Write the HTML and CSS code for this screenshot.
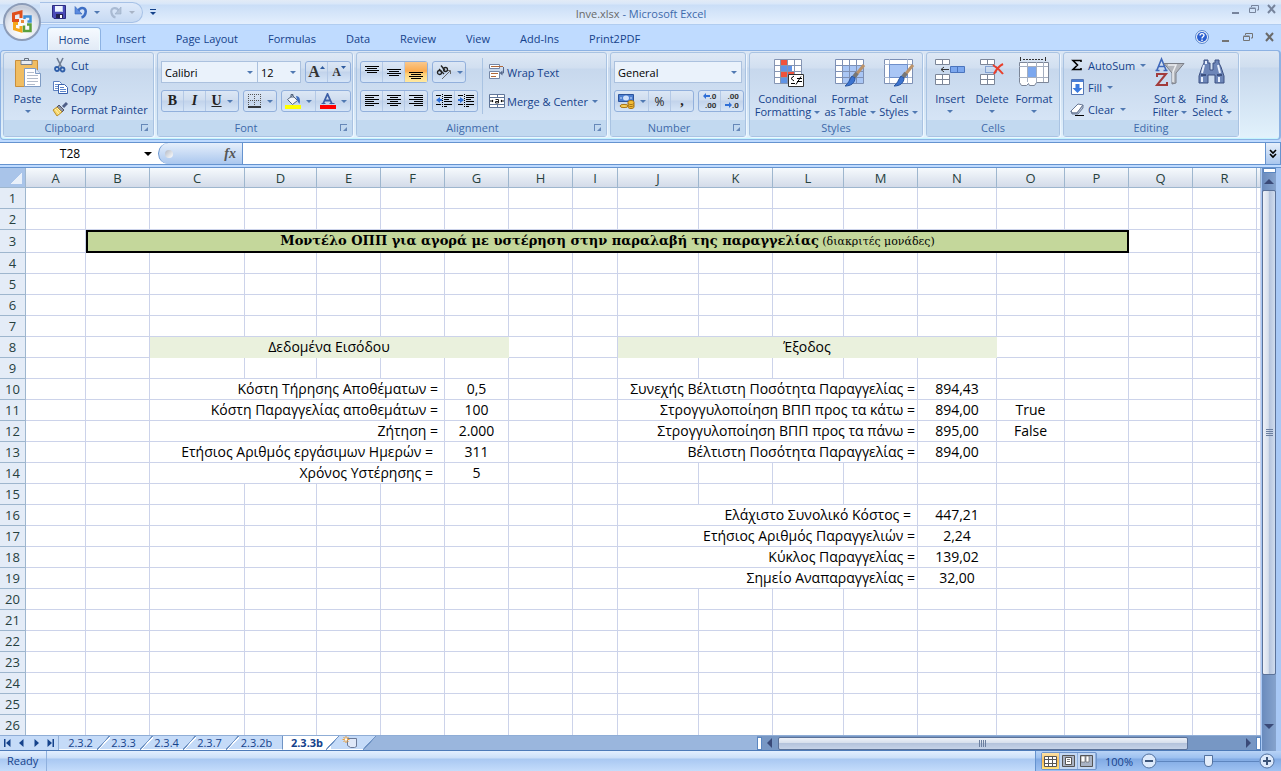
FILE: index.html
```html
<!DOCTYPE html>
<html lang="en">
<head>
    <meta charset="UTF-8">
    <meta name="viewport" content="width=device-width, initial-scale=1.0">
    <title>Inve.xlsx - Microsoft Excel</title>
    <link rel="stylesheet" href="styles.css">
</head>
<body>

    <!-- Title bar -->
    <header class="titlebar">
        <div class="quick-access">
            <button class="qa-btn" aria-label="Save">
                <svg width="14" height="14" viewBox="0 0 14 14"><path d="M.5.5h13v13H2L.5 12z" fill="#4a4ab8" stroke="#2c2c80"/><path d="M3 1h8v6H3z" fill="#eef3ff"/><path d="M10 1h1v6H3V6h7z" fill="#b9c8ee"/><path d="M4 9h7v4H4z" fill="#23234f"/><path d="M8 10h2v3H8z" fill="#fff"/></svg>
            </button>
            <button class="qa-btn" aria-label="Undo">
                <svg width="14" height="14" viewBox="0 0 14 14"><path d="M4 6c3-5 9-3 7.500 2C11 10.500 9.500 12 7.500 12.500" fill="none" stroke="#3f6fc4" stroke-width="2.600"/><path d="M1 1.500V9h7z" fill="#5b8be0" stroke="#3765b8" stroke-width=".6"/></svg>
            </button>
            <span class="arrow"></span>
            <button class="qa-btn qa-redo" aria-label="Redo">
                <svg width="14" height="14" viewBox="0 0 14 14"><path d="M10 6C7 1 1 3 2.500 8 3 10.500 4.500 12 6.500 12.500" fill="none" stroke="#a9bad2" stroke-width="2.200"/><path d="M12 2v7H6z" fill="#b4c3d8" stroke="#98abc6" stroke-width=".6"/></svg>
            </button>
            <span class="arrow arrow-off"></span>
        </div>
        <button class="qa-more" aria-label="Customize Quick Access Toolbar"><span class="arrow arrow-dark"></span></button>
        <h1 class="title"><span class="title-file">Inve.xlsx</span> - Microsoft Excel</h1>
        <div class="win-buttons">
            <button aria-label="Minimize"><svg width="10" height="10" viewBox="0 0 10 10"><path d="M1 8h7v2H1z" fill="#77849c"/></svg></button>
            <button aria-label="Restore"><svg width="10" height="10" viewBox="0 0 10 10"><path d="M2.500 3V1.500h7V6H8M.5 4.500h6v4h-6zM.5 4h6" fill="none" stroke="#77849c"/></svg></button>
            <button aria-label="Close"><svg width="10" height="10" viewBox="0 0 10 10"><path d="M1 1l7 8M8 1L1 9" stroke="#77849c" stroke-width="2"/></svg></button>
        </div>
    </header>

    <!-- Office button, over the title bar and the tabs -->
    <button class="office-btn" aria-label="Office Button">
        <svg width="26" height="26" viewBox="0 0 24 26">
            <g fill="none" stroke-width="3">
                <path d="M9 11.500H3.500V5L11 3v6" stroke="#e0501c"/>
                <path d="M14.500 10V7.500h6v5h-3" stroke="#3f8ed6" stroke-width="2.500"/>
                <path d="M8 14.500H4.500V20l6.500 2v-5" stroke="#f5a81c"/>
                <path d="M14 16.500v5.500h6.500v-6.500h-3.500" stroke="#5ba03c" stroke-width="2.500"/>
            </g>
            <path d="M11 11h3v3h-3z" fill="#e88a3a"/>
        </svg>
    </button>

    <!-- Ribbon tabs -->
    <nav class="tabs">
        <button class="tab tab-active">Home</button>
        <button class="tab">Insert</button>
        <button class="tab">Page Layout</button>
        <button class="tab">Formulas</button>
        <button class="tab">Data</button>
        <button class="tab">Review</button>
        <button class="tab">View</button>
        <button class="tab">Add-Ins</button>
        <button class="tab">Print2PDF</button>
        <div class="doc-buttons">
            <button aria-label="Help"><svg width="14" height="14" viewBox="0 0 14 14"><circle cx="7" cy="7" r="6.400" fill="#fff" stroke="#4a7cc8"/><circle cx="7" cy="7" r="5" fill="#2a5fd0"/><path d="M5 5.500C5 3 9 3 9 5.300 9 6.800 7 6.800 7 8.500M7 9.500V11" fill="none" stroke="#fff" stroke-width="1.400"/></svg></button>
            <button aria-label="Minimize workbook"><svg width="10" height="10" viewBox="0 0 10 10"><path d="M1 8h7v2H1z" fill="#747474"/></svg></button>
            <button aria-label="Restore workbook"><svg width="10" height="10" viewBox="0 0 10 10"><path d="M2.500 3V1.500h7V6H8M.5 4.500h6v4h-6zM.5 4h6" fill="none" stroke="#747474"/></svg></button>
            <button aria-label="Close workbook"><svg width="10" height="10" viewBox="0 0 10 10"><path d="M1 1l7 8M8 1L1 9" stroke="#6a6a6a" stroke-width="2"/></svg></button>
        </div>
    </nav>

    <!-- Ribbon -->
    <div class="ribbon">

        <section class="group group-clipboard">
            <div class="group-body">
                <button class="big-btn">
                    <svg width="32" height="32" viewBox="0 0 32 32"><path d="M3.500 3.500h22v26h-22z" fill="#f0bd62" stroke="#c98f3c"/><path d="M9 3.500h11v4H9z" fill="#e8ecf2" stroke="#76808e"/><path d="M12.500 3.500v-2h4v2" fill="none" stroke="#66707e"/><path d="M12.500 11.500h11l5 5v13h-16z" fill="#fff" stroke="#7f9cc4"/><path d="M23.500 11.500v5h5" fill="#dfe8f5" stroke="#7f9cc4"/><path d="M15 15.500h7M15 18.500h11M15 21.500h11M15 24.500h11M15 27.500h8" stroke="#b3bccb"/></svg>
                    <span>Paste</span>
                    <span class="arrow"></span>
                </button>
                <div class="stack">
                    <button class="row-btn"><svg width="16" height="16" viewBox="0 0 16 16"><path d="M5 1l5 10M11 1L6 11" stroke="#6f7c92" stroke-width="1.600"/><circle cx="5" cy="12" r="2" fill="none" stroke="#2f5ea8" stroke-width="1.800"/><circle cx="10.500" cy="12.500" r="2" fill="none" stroke="#2f5ea8" stroke-width="1.800"/></svg>Cut</button>
                    <button class="row-btn"><svg width="16" height="16" viewBox="0 0 16 16"><path d="M1.500 2.500h6l2 2v7h-8z" fill="#fff" stroke="#5b7fc0"/><path d="M3 5.500h4M3 7.500h3M3 9.500h3" stroke="#6f92cf"/><path d="M6.500 5.500h6l3 3v6h-9z" fill="#fff" stroke="#3a62ae"/><path d="M8 8.500h4M8 10.500h6M8 12.500h6" stroke="#5b84cc"/></svg>Copy</button>
                    <button class="row-btn"><svg width="16" height="16" viewBox="0 0 16 16"><path d="M11 6l4-4" stroke="#4e5f88" stroke-width="3"/><path d="M7 4l5 5-2 2-5-5z" fill="#8a94a8" stroke="#556"/><path d="M5 6l5 5-5 4-4-6z" fill="#f6d568" stroke="#b98f2c"/><path d="M3 8l4 5M5 7l4 4" stroke="#fff3b8"/></svg>Format Painter</button>
                </div>
            </div>
            <footer class="group-label">Clipboard<i class="launcher"></i></footer>
        </section>

        <section class="group group-font">
            <div class="group-body rows">
                <div class="tool-row">
                    <div class="combos">
                        <label class="combo combo-font"><select aria-label="Font"><option>Calibri</option></select></label>
                        <label class="combo combo-size"><select aria-label="Font size"><option>12</option></select></label>
                    </div>
                    <div class="btn-set">
                        <button class="glyph glyph-a" aria-label="Increase font size">A<svg width="5" height="12" viewBox="0 0 5 12"><path d="M0 3l2.500-3L5 3z" fill="#2d5a9e"/></svg></button>
                        <button class="glyph glyph-a glyph-small" aria-label="Decrease font size">A<svg width="5" height="12" viewBox="0 0 5 12"><path d="M0 0h5L2.500 3z" fill="#2d5a9e"/></svg></button>
                    </div>
                </div>
                <div class="tool-row">
                    <div class="btn-set">
                        <button class="glyph"><b>B</b></button>
                        <button class="glyph"><b><i>I</i></b></button>
                        <button class="glyph wide"><b><u>U</u></b><span class="arrow"></span></button>
                    </div>
                    <div class="btn-set">
                        <button class="wide" aria-label="Borders"><svg width="14" height="14" viewBox="0 0 14 14"><path d="M.5 0v12M6.500 0v12M12.500 0v12M0 .5h13M0 6.500h13" stroke="#555" stroke-dasharray="1 1"/><path d="M0 13h13" stroke="#000" stroke-width="1.500"/></svg><span class="arrow"></span></button>
                    </div>
                    <div class="btn-set">
                        <button class="wider" aria-label="Fill color"><svg width="16" height="16" viewBox="0 0 16 16"><path d="M2.500 6.500l5-4 5 5-5 4z" fill="#f4f7fc" stroke="#53657f"/><path d="M6 5V1.500h2V5" fill="none" stroke="#53657f"/><path d="M11 3c4 0 4.500 4 3.500 8-1-1-2-3-2.500-4.500z" fill="#3f6ec0"/><path d="M0 12h16v4H0z" fill="#ff0"/></svg><span class="arrow"></span></button>
                        <button class="wider" aria-label="Font color"><svg width="16" height="16" viewBox="0 0 16 16"><path d="M3 11L7.500 1 12 11M4.500 7.500h6" fill="none" stroke="#3d5fa6" stroke-width="1.800"/><path d="M1.500 10.500h4M9.500 10.500h5" stroke="#3d5fa6"/><path d="M0 12h16v4H0z" fill="#f00"/></svg><span class="arrow"></span></button>
                    </div>
                </div>
            </div>
            <footer class="group-label">Font<i class="launcher"></i></footer>
        </section>

        <section class="group group-align">
            <div class="group-body">
                <div class="rows">
                    <div class="tool-row">
                        <div class="btn-set">
                            <button aria-label="Top align"><svg width="14" height="14" viewBox="0 0 14 14"><path d="M0 1.500h14M2 3.500h10M0 5.500h14M2 7.500h10" stroke="#000"/></svg></button>
                            <button aria-label="Middle align"><svg width="14" height="14" viewBox="0 0 14 14"><path d="M0 4.500h14M2 6.500h10M0 8.500h14M2 10.500h10" stroke="#000"/></svg></button>
                            <button class="pressed" aria-label="Bottom align"><svg width="14" height="14" viewBox="0 0 14 14"><path d="M0 7.500h14M2 9.500h10M0 11.500h14M2 13.500h10" stroke="#000"/></svg></button>
                        </div>
                        <div class="btn-set">
                            <button class="wide" aria-label="Orientation"><svg width="16" height="16" viewBox="0 0 16 16"><path d="M6 15l8-8M14.500 10V6.500H11" fill="none" stroke="#666"/><circle cx="3.500" cy="8.500" r="2" fill="none" stroke="#222" stroke-width="1.300"/><path d="M3 5l5 5" stroke="#222" stroke-width="1.300"/><circle cx="9.500" cy="5.500" r="2" fill="none" stroke="#222" stroke-width="1.300"/><path d="M5 1.500l4 5" stroke="#222" stroke-width="1.300"/></svg><span class="arrow"></span></button>
                        </div>
                    </div>
                    <div class="tool-row">
                        <div class="btn-set">
                            <button aria-label="Align left"><svg width="14" height="14" viewBox="0 0 14 14"><path d="M0 1.500h14M0 3.500h9M0 5.500h14M0 7.500h9M0 9.500h14M0 11.500h9" stroke="#000"/></svg></button>
                            <button aria-label="Center"><svg width="14" height="14" viewBox="0 0 14 14"><path d="M0 1.500h14M3 3.500h8M0 5.500h14M3 7.500h8M0 9.500h14M3 11.500h8" stroke="#000"/></svg></button>
                            <button aria-label="Align right"><svg width="14" height="14" viewBox="0 0 14 14"><path d="M0 1.500h14M5 3.500h9M0 5.500h14M5 7.500h9M0 9.500h14M5 11.500h9" stroke="#000"/></svg></button>
                        </div>
                        <div class="btn-set">
                            <button aria-label="Decrease indent"><svg width="16" height="14" viewBox="0 0 16 14"><path d="M0 1.500h5M8 1.500h8M8 3.500h8M8 5.500h5M8 7.500h8M0 10.500h5M8 10.500h8M8 12.500h3" stroke="#000"/><path d="M6.500 0v14" stroke="#000" stroke-dasharray="1 1"/><path d="M0 6l4-3v2h2v2H4v2z" fill="#2f6fd6"/></svg></button>
                            <button aria-label="Increase indent"><svg width="16" height="14" viewBox="0 0 16 14"><path d="M0 1.500h5M8 1.500h8M8 3.500h8M8 5.500h5M8 7.500h8M0 10.500h5M8 10.500h8M8 12.500h3" stroke="#000"/><path d="M6.500 0v14" stroke="#000" stroke-dasharray="1 1"/><path d="M6 6L2 3v2H0v2h2v2z" fill="#2f6fd6"/></svg></button>
                        </div>
                    </div>
                </div>
                <div class="wrap-merge">
                    <button class="row-btn"><svg width="16" height="16" viewBox="0 0 16 16"><path d="M.5.5h10v4H.5zM.5 7.500h10v7H.5z" fill="#fff" stroke="#7486a5"/><path d="M2 2.500h12M2 9.500h7M2 12.500h5" stroke="#b0693a"/><path d="M14.500 3v6h-2" fill="none" stroke="#56698c"/><path d="M10.500 9l3-2.500v5z" fill="#56698c"/></svg>Wrap Text</button>
                    <button class="row-btn"><svg width="16" height="16" viewBox="0 0 16 16"><path d="M.5 1.500h15v13H.5z" fill="#fff" stroke="#5f7599"/><path d="M0 4.500h16M0 11.500h16M8.500 1v3M8.500 12v3" stroke="#5f7599"/><path d="M1 8h3M12 8h3" stroke="#000"/><path d="M4.500 8L3 6.500v3zM11.500 8L13 6.500v3z" fill="#000"/><path d="M6.500 6.500h3v3.500h-3V8.500h3" fill="none" stroke="#222"/></svg>Merge &amp; Center<span class="arrow"></span></button>
                </div>
            </div>
            <footer class="group-label">Alignment<i class="launcher"></i></footer>
        </section>

        <section class="group group-number">
            <div class="group-body rows">
                <div class="tool-row">
                    <label class="combo combo-number"><select aria-label="Number format"><option>General</option></select></label>
                </div>
                <div class="tool-row">
                    <div class="btn-set">
                        <button class="wider" aria-label="Accounting format"><svg width="17" height="16" viewBox="0 0 17 16"><path d="M.5 1.500h15v7H.5z" fill="#4d7fd0" stroke="#2b539c"/><ellipse cx="8" cy="5" rx="3" ry="2.500" fill="#cfe0fa"/><path d="M2 5h2M12 5h2" stroke="#cfe0fa"/><path d="M10 9c0-2 6-2 6 0v5c0 2-6 2-6 0z" fill="#f3bd36" stroke="#a87416"/><path d="M10 10.500c2 1.500 4 1.500 6 0M10 12.500c2 1.500 4 1.500 6 0" fill="none" stroke="#a87416"/><ellipse cx="6" cy="13" rx="4" ry="1.600" fill="#f7cf58" stroke="#a87416"/></svg><span class="arrow"></span></button>
                        <button class="sign">%</button>
                        <button class="glyph"><b>,</b></button>
                    </div>
                    <div class="btn-set">
                        <button aria-label="Increase decimal">
                            <span class="decimals">
                                <span><svg width="7" height="6" viewBox="0 0 7 6"><path d="M0 3l3-3v2h4v2H3v2z" fill="#2f6fd6"/></svg>.0</span>
                                <span>.00</span>
                            </span>
                        </button>
                        <button aria-label="Decrease decimal">
                            <span class="decimals">
                                <span>.00</span>
                                <span><svg width="7" height="6" viewBox="0 0 7 6"><path d="M7 3L4 0v2H0v2h4v2z" fill="#2f6fd6"/></svg>.0</span>
                            </span>
                        </button>
                    </div>
                </div>
            </div>
            <footer class="group-label">Number<i class="launcher"></i></footer>
        </section>

        <section class="group group-styles">
            <div class="group-body">
                <button class="big-btn">
                    <svg width="32" height="32" viewBox="0 0 32 32"><path d="M2.500 2.500h27v24h-27z" fill="#fff"/><path d="M9 3h7v5H9zM9 14h13v6H9z" fill="#f0523c"/><path d="M9 8h11v6H9zM9 20h6v6H9z" fill="#5f93e6"/><path d="M2.500 2.500h27v24h-27zM8.500 2v24M15.500 2v24M22.500 2v24M2 8.500h27M2 14.500h27M2 20.500h27" fill="none" stroke="#8595b3"/><path d="M16.500 17.500h15v12h-15z" fill="#fff" stroke="#333"/><path d="M22 19l-3 2.500 3 2.500M19 26.500h4M24 27.500l5-8M25 21.500h5M25 24.500h5" fill="none" stroke="#000"/></svg>
                    <span>Conditional<br>Formatting<span class="arrow"></span></span>
                </button>
                <button class="big-btn">
                    <svg width="32" height="32" viewBox="0 0 32 32"><path d="M1.500 2.500h28v24h-28z" fill="#fff"/><path d="M8 8h21v18H8z" fill="#a9c6f5"/><path d="M1.500 2.500h28v24h-28zM8.500 2v24M15.500 2v24M22.500 2v24M1 8.500h28M1 14.500h28M1 20.500h28" fill="none" stroke="#7d90b5"/><path d="M30 8l-9 11" stroke="#bb936a" stroke-width="3"/><path d="M23 16l-3 4" stroke="#777" stroke-width="4"/><path d="M21 21c0 5-4 8-10 8 4-3 4-6 7-10z" fill="#3c73cf" stroke="#27549f"/></svg>
                    <span>Format<br>as Table<span class="arrow"></span></span>
                </button>
                <button class="big-btn">
                    <svg width="32" height="32" viewBox="0 0 32 32"><path d="M1.500 2.500h28v24h-28z" fill="#fff" stroke="#7d90b5"/><path d="M1 7.500h28M1 20.500h28M6.500 2v24M24.500 2v24" stroke="#aab8d0"/><path d="M6.500 7.500h18v13h-18z" fill="#a9c6f5" stroke="#6f8fc9"/><path d="M30 8l-9 11" stroke="#bb936a" stroke-width="3"/><path d="M23 16l-3 4" stroke="#777" stroke-width="4"/><path d="M21 21c0 5-4 8-10 8 4-3 4-6 7-10z" fill="#3c73cf" stroke="#27549f"/></svg>
                    <span>Cell<br>Styles<span class="arrow"></span></span>
                </button>
            </div>
            <footer class="group-label">Styles</footer>
        </section>

        <section class="group group-cells">
            <div class="group-body">
                <button class="big-btn">
                    <svg width="32" height="32" viewBox="0 0 32 32"><path d="M1.500 2.500h14v5h-14zM8.500 2.500v5M1.500 17.500h14v10h-14zM8.500 17v10M1 22.500h14" fill="#fff" stroke="#7c8698"/><path d="M16.500 9.500h14v6h-14zM23.500 9v6" fill="#7ba7ee" stroke="#4a74bd"/><path d="M7 12.500h8M10 10l-3 2.500 3 2.500" fill="none" stroke="#333"/></svg>
                    <span>Insert</span>
                    <span class="arrow"></span>
                </button>
                <button class="big-btn">
                    <svg width="32" height="32" viewBox="0 0 32 32"><path d="M4.500 2.500h14v5h-14zM11.500 2.500v5M4.500 17.500h14v10h-14zM11.500 17v10M4 22.500h14" fill="#fff" stroke="#7c8698"/><path d="M9.500 9.500h11v6h-11z" fill="none" stroke="#3a66b5" stroke-dasharray="1 1"/><path d="M17 8c3 2 7 5 10 9M27 7c-4 2-7 6-9 10" fill="none" stroke="#e8402c" stroke-width="2"/></svg>
                    <span>Delete</span>
                    <span class="arrow"></span>
                </button>
                <button class="big-btn">
                    <svg width="32" height="32" viewBox="0 0 32 32"><path d="M2.500 0v4M27.500 0v4" stroke="#333"/><path d="M5 2.500h20" stroke="#333" stroke-dasharray="2 1"/><path d="M1.500 5.500h29v20h-12l-2 3h-5l-1-2-2 2h-5l-2-3z" fill="#fff" stroke="#7c8698"/><path d="M9.500 5v20M18.500 5v20M25.500 5v20M1 9.500h29M1 20.500h29" stroke="#a5afc0"/><path d="M10 10h8v10h-8z" fill="#7ba7ee"/></svg>
                    <span>Format</span>
                    <span class="arrow"></span>
                </button>
            </div>
            <footer class="group-label">Cells</footer>
        </section>

        <section class="group group-editing">
            <div class="group-body">
                <div class="stack">
                    <button class="row-btn"><svg width="16" height="16" viewBox="0 0 16 16"><path d="M12 5V3.500H4L8.500 8 4 12.500h8V11" fill="none" stroke="#000" stroke-width="1.600"/></svg>AutoSum<span class="arrow"></span></button>
                    <button class="row-btn"><svg width="16" height="16" viewBox="0 0 16 16"><path d="M2.500.5h12v15h-12z" fill="#fff" stroke="#5476b4"/><path d="M3 1h11v2H3z" fill="#4c7fd6"/><path d="M6.500 5h4v4h3L8.500 14l-5-5h3z" fill="#3b7be0"/></svg>Fill<span class="arrow"></span></button>
                    <button class="row-btn"><svg width="16" height="16" viewBox="0 0 16 16"><path d="M2 10l7-7 5 1-6 8H3z" fill="#fff" stroke="#6a7a96"/><path d="M8 12l6-8v3l-5 6H3l-1-3 1 2z" fill="#b8c4d8" stroke="#6a7a96"/><path d="M6 14.500h9" stroke="#000"/></svg>Clear<span class="arrow"></span></button>
                </div>
                <button class="big-btn">
                    <svg width="32" height="32" viewBox="0 0 32 32"><path d="M3 13L7.500 2 12 13M4.500 9.500h6M1.500 13.500h4M9.500 13.500h4" fill="none" stroke="#3f68ba" stroke-width="1.600"/><path d="M3 20v-3h9L3 28h10v-3" fill="none" stroke="#a23c3c" stroke-width="2"/><path d="M10 6.500h20L22 16v10l-4 1V16z" fill="#b4b7bd" stroke="#7b7f88"/><path d="M14 8h8l-3 7v10" fill="none" stroke="#eceef1" stroke-width="1.500"/></svg>
                    <span>Sort &amp;<br>Filter<span class="arrow"></span></span>
                </button>
                <button class="big-btn">
                    <svg width="32" height="32" viewBox="0 0 32 32"><path d="M8 3h4v3h2v7h3V6h2V3h4v3l2 4 3 9v7h-9v-8h-7v8H3v-7l3-9 2-4z" fill="#6d86b8" stroke="#3d5182"/><path d="M5 18h5M21 18h5" stroke="#2d3f6c" stroke-width="1.500"/><path d="M8 8L6 16M22 8l2 8M6 20v5M23 20v5M10 4v3" stroke="#e6eefc" stroke-width="2"/></svg>
                    <span>Find &amp;<br>Select<span class="arrow"></span></span>
                </button>
            </div>
            <footer class="group-label">Editing</footer>
        </section>
    </div>

    <!-- Formula bar -->
    <div class="formula-bar">
        <div class="name-box"><input type="text" value="T28" aria-label="Name box"><span class="arrow arrow-black"></span></div>
        <div class="fx">
            <span class="knob"></span>
            <button aria-label="Insert function"><i>fx</i></button>
        </div>
        <input class="formula-input" type="text" aria-label="Formula">
        <button class="expand" aria-label="Expand formula bar"><svg width="8" height="10" viewBox="0 0 8 10"><path d="M1 1l3 3 3-3M1 5l3 3 3-3" fill="none" stroke="#000" stroke-width="1.600"/></svg></button>
    </div>

    <!-- Worksheet -->
    <main class="workbook">
        <div class="sheet-area">
            <div class="grid-view">
                <table class="grid" id="grid"></table>
            </div>
            <div class="sheet-bar">
                <div class="sheet-nav">
                    <button aria-label="First sheet"><svg width="7" height="8" viewBox="0 0 7 8"><path d="M0 0h1.500v8H0zM6.500 0v8L2 4z" fill="#15428b"/></svg></button>
                    <button aria-label="Previous sheet"><svg width="7" height="8" viewBox="0 0 7 8"><path d="M5.500 0v8L1 4z" fill="#15428b"/></svg></button>
                    <button aria-label="Next sheet"><svg width="7" height="8" viewBox="0 0 7 8"><path d="M1.500 0v8L6 4z" fill="#15428b"/></svg></button>
                    <button aria-label="Last sheet"><svg width="7" height="8" viewBox="0 0 7 8"><path d="M5.500 0H7v8H5.500zM.5 0v8L5 4z" fill="#15428b"/></svg></button>
                </div>
                <button class="sheet-tab">2.3.2</button>
                <button class="sheet-tab">2.3.3</button>
                <button class="sheet-tab">2.3.4</button>
                <button class="sheet-tab">2.3.7</button>
                <button class="sheet-tab sheet-last">2.3.2b</button>
                <button class="sheet-tab sheet-active">2.3.3b</button>
                <button class="sheet-tab sheet-new" aria-label="Insert worksheet"><svg width="16" height="13" viewBox="0 0 16 13"><path d="M5.500 2.500h9v8l-2 1h-4l-3-2z" fill="#dfe8f8" stroke="#6b7a99"/><path d="M4 0v7M.5 3.500h7M1.500 1l5 5M6.500 1l-5 5" stroke="#f09a28"/><circle cx="4" cy="3.500" r="1.200" fill="#fff"/></svg></button>
                <div class="hscroll">
                    <i class="split"></i>
                    <button aria-label="Scroll left"><svg width="6" height="10" viewBox="0 0 6 10"><path d="M5 0v10L0 5z" fill="#3a4a78"/></svg></button>
                    <div class="hthumb"><i></i></div>
                    <button aria-label="Scroll right"><svg width="6" height="10" viewBox="0 0 6 10"><path d="M1 0v10l5-5z" fill="#3a4a78"/></svg></button>
                    <i class="split"></i>
                </div>
            </div>
        </div>
        <div class="vscroll">
            <i class="vsplit"></i>
            <button aria-label="Scroll up"><svg width="10" height="5" viewBox="0 0 10 5"><path d="M0 5h10L5 0z" fill="#3a4a78"/></svg></button>
            <div class="vthumb"><i></i></div>
            <button aria-label="Scroll down"><svg width="10" height="5" viewBox="0 0 10 5"><path d="M0 0h10L5 5z" fill="#3a4a78"/></svg></button>
        </div>
    </main>

    <!-- Status bar -->
    <footer class="status-bar">
        <span class="ready">Ready</span>
        <div class="status-right">
            <div class="views">
                <button class="view-on" aria-label="Normal view"><svg width="13" height="11" viewBox="0 0 13 11"><path d="M.5.5h12v10H.5zM4.500 0v11M8.500 0v11M0 3.500h13M0 7.500h13" fill="#fff" stroke="#555"/></svg></button>
                <button aria-label="Page layout view"><svg width="13" height="12" viewBox="0 0 13 12"><path d="M.5.5h12v11H.5z" fill="#a9b3c4" stroke="#555"/><path d="M3.500 2.500h6v7h-6z" fill="#fff" stroke="#555"/><path d="M5 4.500h3M5 6.500h3" stroke="#777"/></svg></button>
                <button aria-label="Page break view"><svg width="13" height="12" viewBox="0 0 13 12"><path d="M.5.5h12v11H.5z" fill="#a9b3c4" stroke="#555"/><path d="M1 1h4v6H1zM6 1h3v6H6z" fill="#fff" stroke="#555" stroke-width=".6"/></svg></button>
            </div>
            <span class="zoom-value">100%</span>
            <button class="zoom-btn" aria-label="Zoom out"><svg width="16" height="16" viewBox="0 0 16 16"><circle cx="8" cy="8" r="7" fill="#dce9fb" stroke="#52719f"/><path d="M4 8h8" stroke="#3c5478" stroke-width="2"/></svg></button>
            <input class="zoom-slider" type="range" min="0" max="100" value="50" aria-label="Zoom">
            <button class="zoom-btn" aria-label="Zoom in"><svg width="16" height="16" viewBox="0 0 16 16"><circle cx="8" cy="8" r="7" fill="#dce9fb" stroke="#52719f"/><path d="M4 8h8M8 4v8" stroke="#3c5478" stroke-width="2"/></svg></button>
        </div>
    </footer>

    <script src="grid.js"></script>
</body>
</html>
```

FILE: styles.css
```css
* {
    margin: 0;
    padding: 0;
    box-sizing: border-box;
}

body {
    display: flex;
    flex-direction: column;
    height: 100vh;
    overflow: hidden;
    background-color: #bfdbff;
    color: #15428b;
    font-family: "Open Sans", "Noto Sans", sans-serif;
    font-size: 12px;
}

button,
input,
select {
    font: inherit;
    color: inherit;
    background: none;
    border: none;
    outline: none;
}

button {
    display: flex;
    align-items: center;
    justify-content: center;
    white-space: nowrap;
}

svg {
    flex: none;
}

/* Small drop-down triangle */
.arrow {
    display: inline-block;
    flex: none;
    border: 3px solid transparent;
    border-top-color: #5079b2;
    border-bottom: none;
}

.arrow-off {
    border-top-color: #a8b4c6;
}

.arrow-black {
    border-width: 4px;
    border-bottom: none;
    border-top-color: #000;
}

.arrow-dark {
    border-top-color: #15428b;
}

/* Title bar */
.titlebar {
    display: flex;
    align-items: center;
    height: 25px;
    padding-left: 40px;
    background: linear-gradient(#e3ebf6 0, #d9e7f9 4px, #cadef7 5px, #e4effd 24px);
    border-bottom: 1px solid #b1cdf0;
}

.quick-access {
    display: flex;
    align-items: center;
    height: 21px;
    width: 103px;
    padding-left: 12px;
    border: 1px solid #a6c1e6;
    border-left: none;
    border-radius: 0 11px 11px 0;
    background: linear-gradient(#dfeafa, #c7daf3);
}

.qa-btn {
    width: 14px;
    height: 14px;
    margin-right: 8px;
}

.qa-btn + .arrow {
    margin: 0 9px 0 -2px;
}

.qa-more {
    flex-direction: column;
    width: 20px;
    height: 20px;
}

.qa-more::before {
    content: '';
    width: 6px;
    height: 1px;
    margin-bottom: 2px;
    background: #15428b;
}

.title {
    flex: 1;
    padding: 2px 112px 0 0;
    text-align: center;
    font-size: 11px;
    font-weight: normal;
    color: #3e6aaa;
}

.title-file {
    color: #696969;
}

.win-buttons,
.doc-buttons {
    display: flex;
    align-items: center;
    gap: 8px;
    padding-right: 4px;
}

.win-buttons {
    height: 18px;
    align-self: flex-start;
}

.doc-buttons {
    gap: 12px;
    margin-left: auto;
    padding: 0 6px 2px 0;
}

.office-btn {
    position: absolute;
    top: 3px;
    left: 3px;
    width: 38px;
    height: 38px;
    border: 2px solid #8c9cb8;
    border-radius: 50%;
    background: radial-gradient(circle at 50% 70%, #fff 10%, #e4e8f0 50%, #c3cad8 75%, #eef1f6);
    z-index: 5;
}

/* Tabs */
.tabs {
    display: flex;
    height: 25px;
    padding-left: 47px;
    background: #bfdbff;
}

.tab {
    height: 27px;
    padding: 0 15px;
    font-size: 11px;
}

.tab-active {
    width: 54px;
    margin-top: 2px;
    height: 24px;
    padding: 0;
    border: 1px solid #8db2e3;
    border-bottom: none;
    border-radius: 4px 4px 0 0;
    background: linear-gradient(#f6faff, #e1eaf6);
    box-shadow: inset 0 0 0 1px #ebfaff;
}

/* Ribbon */
.ribbon {
    display: flex;
    gap: 3px;
    height: 90px;
    padding: 1px 2px 2px;
    border: 1px solid #8db2e3;
    border-right-width: 2px;
    border-radius: 4px;
    background: linear-gradient(#dbe6f4 0, #d0deef 16px, #c7d8ed 17px, #e2f2fc 100%);
    box-shadow: inset 0 -1px #c2f5ff;
}

.group {
    display: flex;
    flex-direction: column;
    flex: none;
    border: 1px solid #a9c3e2;
    border-radius: 3px;
    background: linear-gradient(#dee8f5 0, #d1dff0 15px, #c7d8ed 16px, #dae8f8 100%);
    box-shadow: 1px 1px #eef6ff;
}

.group-clipboard { width: 151px; }
.group-font { width: 196px; }
.group-align { width: 251px; }
.group-number { width: 136px; }
.group-styles { width: 174px; }
.group-cells { width: 134px; }
.group-editing { width: 176px; }

.group-body {
    display: flex;
    flex: 1;
    min-height: 0;
}

.group-label {
    position: relative;
    flex: none;
    height: 16px;
    line-height: 15px;
    padding-right: 18px;
    text-align: center;
    font-size: 11px;
    color: #3e6aaa;
    background: #c2d9f0;
}

.group-styles .group-label,
.group-cells .group-label,
.group-editing .group-label {
    padding-right: 0;
}

.launcher {
    position: absolute;
    top: 4px;
    right: 5px;
    width: 7px;
    height: 7px;
    border: 1px solid #6688b8;
    border-right: none;
    border-bottom: none;
}

.launcher::after {
    content: '';
    position: absolute;
    top: 2px;
    left: 2px;
    border: 2px solid #6688b8;
    border-left-color: transparent;
    border-top-color: transparent;
}

.rows {
    flex-direction: column;
    padding: 8px 0 0 3px;
}

.tool-row {
    display: flex;
    gap: 4px;
    height: 22px;
    margin-bottom: 7px;
}

.btn-set {
    display: flex;
    border: 1px solid #92b0dc;
    border-radius: 3px;
    background: linear-gradient(#dce7f5 0, #cfddef 9px, #c2d3eb 10px, #d6e5f7);
}

.btn-set button {
    width: 22px;
    height: 20px;
    border-right: 1px solid #b4c9e6;
}

.btn-set button:last-child {
    border-right: none;
}

.btn-set .wide,
.btn-set .wider {
    width: 32px;
    gap: 5px;
}

.btn-set .wider {
    width: 34px;
}

.btn-set .pressed {
    background: linear-gradient(#f9c88c 0, #fcab4e 9px, #fdd27a 12px, #ffe9a0);
}

.glyph {
    font-family: "Liberation Serif", serif;
    font-size: 14px;
    line-height: 16px;
    color: #222;
}

.glyph-a {
    font-size: 16px;
    font-weight: bold;
    color: #333;
}

.glyph-small {
    font-size: 12px;
}

.sign {
    color: #222;
}

.decimals {
    display: flex;
    flex-direction: column;
    align-items: flex-end;
    font-family: Roboto, sans-serif;
    font-size: 8px;
    line-height: 9px;
    font-weight: bold;
    color: #333;
}

.combos {
    display: flex;
}

.combo {
    position: relative;
    display: flex;
    height: 22px;
    border: 1px solid #abc1de;
    background: #eaf2fb;
}

.combo::after {
    content: '';
    position: absolute;
    top: 9px;
    right: 4px;
    border: 3px solid transparent;
    border-top-color: #5079b2;
    border-bottom: none;
}

.combo select {
    width: 100%;
    padding-left: 3px;
    appearance: none;
    font-size: 11px;
    color: #000;
}

.combo-font { width: 97px; }
.combo-size { width: 44px; margin-left: -1px; }
.combo-number { width: 128px; }

.stack {
    display: flex;
    flex-direction: column;
    padding: 1px 0 0 1px;
}

.row-btn {
    flex: none;
    justify-content: flex-start;
    gap: 3px;
    height: 22px;
    font-size: 11px;
}

.wrap-merge {
    display: flex;
    flex-direction: column;
    gap: 7px;
    height: 56px;
    margin: 5px 0 0 4px;
    padding: 3px 0 0 6px;
    border-left: 1px solid #a9c3e2;
}

.wrap-merge .row-btn {
    gap: 2px;
}

.row-btn .arrow {
    margin-left: 2px;
}

.big-btn {
    flex-direction: column;
    justify-content: flex-start;
    width: 42px;
    padding-top: 4px;
    font-size: 11px;
    line-height: 13px;
}

.big-btn > span:not(.arrow) {
    margin-top: 3px;
}

.big-btn > .arrow {
    margin-top: 5px;
}

.big-btn span .arrow {
    margin: 0 0 2px 3px;
}

.group-clipboard .big-btn,
.group-styles .big-btn {
    width: 47px;
}

.group-styles .big-btn:first-child {
    width: 75px;
}

.group-styles .big-btn:nth-child(2) {
    width: 50px;
}

.group-cells .group-body {
    padding-left: 2px;
}

.group-editing .stack {
    width: 85px;
    padding-left: 5px;
}

/* Formula bar */
.formula-bar {
    display: flex;
    height: 23px;
    margin-top: 2px;
    border: 1px solid #6593cf;
    border-left: none;
    background: #fff;
}

.name-box {
    display: flex;
    align-items: center;
    width: 158px;
    padding-right: 6px;
}

.name-box input {
    flex: 1;
    min-width: 0;
    padding-right: 4px;
    text-align: center;
    color: #000;
}

.fx {
    display: flex;
    align-items: center;
    justify-content: space-between;
    width: 85px;
    padding: 0 6px;
    border: 1px solid #6593cf;
    border-width: 0 1px;
    border-radius: 11px 0 0 11px;
    background: linear-gradient(#e6effb, #aac7ee);
}

.knob {
    width: 8px;
    height: 8px;
    border-radius: 50%;
    background: linear-gradient(135deg, #b3b9c4, #fff);
}

.fx button {
    font-family: "Liberation Serif", serif;
    font-size: 14px;
    line-height: 16px;
    font-weight: bold;
    color: #555;
}

.formula-input {
    flex: 1;
    padding: 0 4px;
    color: #000;
}

.expand {
    width: 15px;
    border-left: 1px solid #6593cf;
    background: linear-gradient(#e6effb, #aac7ee);
}

/* Worksheet */
.workbook {
    display: flex;
    flex: 1;
    min-height: 0;
    border-top: 1px solid #6593cf;
    margin-top: 2px;
}

.sheet-area {
    display: flex;
    flex-direction: column;
    flex: 1;
    min-width: 0;
}

.grid-view {
    flex: 1;
    overflow: hidden;
    background: #fff;
}

.grid {
    width: 100%;
    table-layout: fixed;
    border-collapse: separate;
    border-spacing: 0;
    color: #000;
    font-size: 14px;
}

.grid th,
.grid td {
    height: 21px;
    line-height: 20px;
    white-space: nowrap;
    overflow: hidden;
    border-right: 1px solid #ccd3ea;
    border-bottom: 1px solid #ccd3ea;
    text-align: center;
}

.grid th {
    font-size: 13px;
    font-weight: normal;
    color: #27413e;
    background: #e4ecf7;
    border-color: #9eb6ce;
}

.grid thead th {
    height: 20px;
    padding-top: 1px;
    line-height: 18px;
    background: linear-gradient(#f6fafd, #d3dbe9);
}

.grid thead .corner {
    background: linear-gradient(135deg, transparent 50%, #e9f0fa 50%) 10px 4px / 12px 12px no-repeat #a9c4e9;
}

.grid .tall > * {
    height: 22px;
}

.grid .label {
    padding-right: 6px;
    text-align: right;
}

.grid .label-spaced {
    padding-right: 11px;
}

.grid .label-tight {
    padding-right: 2px;
}

.grid .section {
    background: #eaf1dd;
    border-color: #eaf1dd;
}

.grid .banner {
    border: 2px solid #000;
    background: #c4d79b;
    font-family: "DejaVu Serif", serif;
    font-size: 11px;
    line-height: 18px;
}

.banner b {
    font-size: 13px;
}

/* Sheet tabs and horizontal scroll bar */
.sheet-bar {
    display: flex;
    height: 16px;
    border-top: 1px solid #8fadd6;
    border-bottom: 1px solid #4d7ab8;
    background: #9ab6dd;
}

.sheet-nav {
    display: flex;
    align-items: center;
    justify-content: space-around;
    width: 59px;
    border-right: 1px solid #8fadd6;
    background: #c5dbf8;
}

.sheet-tab {
    position: relative;
    width: 43px;
    font-size: 11px;
    border-bottom: 1px solid #fff;
    background: #c5dbf8;
}

/* slanted edge on the right of each tab */
.sheet-tab::after {
    content: '';
    position: absolute;
    top: 0;
    right: -8px;
    width: 13px;
    height: 14px;
    background: linear-gradient(to bottom right, transparent 45%, #6f93c4 46%, #6f93c4 51%, #fff 52%, #fff 57%, transparent 58%);
    z-index: 1;
}

.sheet-last {
    width: 51px;
}

.sheet-last::after {
    display: none;
}

.sheet-active {
    width: 49px;
    border-left: 1px solid #6f93c4;
    font-weight: bold;
    background: #fff;
}

.sheet-active::after {
    background: linear-gradient(to bottom right, #fff 46%, #6f93c4 47%, #6f93c4 52%, transparent 53%);
}

.sheet-new {
    width: 32px;
    padding-left: 5px;
}

.sheet-new::after {
    right: -13px;
    background: linear-gradient(to bottom right, #c5dbf8 46%, #6f93c4 47%, #6f93c4 52%, transparent 53%);
}

.hscroll {
    display: flex;
    align-items: center;
    width: 40%;
    margin-left: auto;
    background: #7797c4;
}

.hscroll button {
    width: 16px;
}

.split {
    width: 5px;
    height: 13px;
    border: 1px solid #5a86c0;
    background: #fff;
}

.hthumb {
    display: flex;
    align-items: center;
    justify-content: center;
    flex: 1;
    height: 13px;
    margin-right: 52px;
    border: 1px solid #5b7299;
    border-radius: 2px;
    background: linear-gradient(#eef1f8 0, #d6dfec 45%, #b4c3dc 50%, #c6d3e8);
}

.hthumb i {
    width: 8px;
    height: 7px;
    background: repeating-linear-gradient(90deg, #6c7f9f 0, #6c7f9f 1px, transparent 1px, transparent 2px);
}

/* Vertical scroll bar */
.vscroll {
    display: flex;
    flex-direction: column;
    align-items: center;
    width: 20px;
    padding-bottom: 16px;
    border: 1px solid #a8c8f5;
    border-width: 0 5px 0 1px;
    background: linear-gradient(90deg, #6a8bbd, #86a3cd);
}

.vscroll button {
    width: 14px;
    height: 17px;
}

.vsplit {
    width: 13px;
    height: 5px;
    border: 1px solid #5a86c0;
    background: #fff;
}

.vthumb {
    display: flex;
    align-items: center;
    justify-content: center;
    flex: 1;
    width: 14px;
    margin-bottom: 43px;
    border: 1px solid #5b7299;
    border-radius: 2px;
    background: linear-gradient(90deg, #eef1f8 0, #d6dfec 45%, #b4c3dc 50%, #d0dcee);
}

.vthumb i {
    width: 7px;
    height: 8px;
    background: repeating-linear-gradient(#6c7f9f 0, #6c7f9f 1px, transparent 1px, transparent 2px);
}

/* Status bar */
.status-bar {
    display: flex;
    height: 20px;
    background: linear-gradient(#e3efff 0, #cbdff8 7px, #a9c8f2 8px, #c4dcfb);
}

.ready {
    width: 47px;
    padding-left: 7px;
    line-height: 20px;
    font-size: 11px;
    border-right: 1px solid #8fb0de;
}

.status-right {
    display: flex;
    align-items: center;
    margin-left: auto;
    padding: 0 6px 0 5px;
    border-left: 1px solid #6593cf;
    background: linear-gradient(#b8d3f6 0, #9cc0f0 7px, #81aae4 8px, #9fc2f2);
}

.views {
    display: flex;
    width: 56px;
    height: 18px;
    border: 1px solid #6f95cc;
    border-radius: 2px;
}

.views button {
    flex: 1;
    border-right: 1px solid #8fb0de;
    background: #c3d8f4;
}

.views .view-on {
    background: linear-gradient(#fde3a8, #f8bd55 50%, #ffe27c);
}

.zoom-value {
    width: 44px;
    text-align: center;
    font-size: 11px;
}

.zoom-btn {
    width: 16px;
    height: 16px;
}

.zoom-slider {
    width: 102px;
    height: 16px;
    appearance: none;
    background: linear-gradient(#5e86bf, #5e86bf) center / 100% 1px no-repeat;
}

.zoom-slider::-webkit-slider-thumb {
    appearance: none;
    width: 9px;
    height: 12px;
    border: 1px solid #52719f;
    border-radius: 1px 1px 5px 5px;
    background: #e3edfb;
}
```

FILE: grid.js
```js
const columns = "ABCDEFGHIJKLMNOPQR".split("");
const widths = [60, 64, 95, 72, 64, 64, 64, 64, 45, 81, 74, 71, 74, 79, 68, 64, 64, 64];
const rowCount = 26;

// row -> column -> [text, colspan, class]
const cells = {
    3: { B: ["<b>Μοντέλο ΟΠΠ για αγορά με υστέρηση στην παραλαβή της παραγγελίας</b> (διακριτές μονάδες)", 15, "banner"] },
    8: { C: ["Δεδομένα Εισόδου", 5, "section"], J: ["Έξοδος", 5, "section"] },
    10: { C: ["Κόστη Τήρησης Αποθέματων =", 4, "label"], G: ["0,5"], J: ["Συνεχής Βέλτιστη Ποσότητα Παραγγελίας =", 4, "label label-tight"], N: ["894,43"] },
    11: { C: ["Κόστη Παραγγελίας αποθεμάτων =", 4, "label"], G: ["100"], J: ["Στρογγυλοποίηση ΒΠΠ προς τα κάτω =", 4, "label label-tight"], N: ["894,00"], O: ["True"] },
    12: { C: ["Ζήτηση =", 4, "label"], G: ["2.000"], J: ["Στρογγυλοποίηση ΒΠΠ προς τα πάνω =", 4, "label label-tight"], N: ["895,00"], O: ["False"] },
    13: { C: ["Ετήσιος Αριθμός εργάσιμων Ημερών =", 4, "label label-spaced"], G: ["311"], J: ["Βέλτιστη Ποσότητα Παραγγελίας =", 4, "label label-tight"], N: ["894,00"] },
    14: { C: ["Χρόνος Υστέρησης =", 4, "label label-spaced"], G: ["5"] },
    16: { J: ["Ελάχιστο Συνολικό Κόστος =", 4, "label"], N: ["447,21"] },
    17: { J: ["Ετήσιος Αριθμός Παραγγελιών =", 4, "label label-tight"], N: ["2,24"] },
    18: { J: ["Κύκλος Παραγγελίας =", 4, "label label-tight"], N: ["139,02"] },
    19: { J: ["Σημείο Αναπαραγγελίας =", 4, "label label-tight"], N: ["32,00"] }
};

let html = '<colgroup><col style="width: 26px">';
widths.forEach(w => html += `<col style="width: ${w}px">`);
html += '<col></colgroup><thead><tr><th class="corner"></th>';
columns.forEach(c => html += `<th>${c}</th>`);
html += "<th></th></tr></thead><tbody>";

for (let r = 1; r <= rowCount; r++) {
    html += `<tr${r === 3 ? ' class="tall"' : ""}><th>${r}</th>`;
    for (let i = 0; i < columns.length;) {
        const [text = "", span = 1, cls = ""] = (cells[r] || {})[columns[i]] || [];
        html += `<td colspan="${span}" class="${cls}">${text}</td>`;
        i += span;
    }
    html += "<td></td></tr>";
}

document.getElementById("grid").innerHTML = html + "</tbody>";
```
